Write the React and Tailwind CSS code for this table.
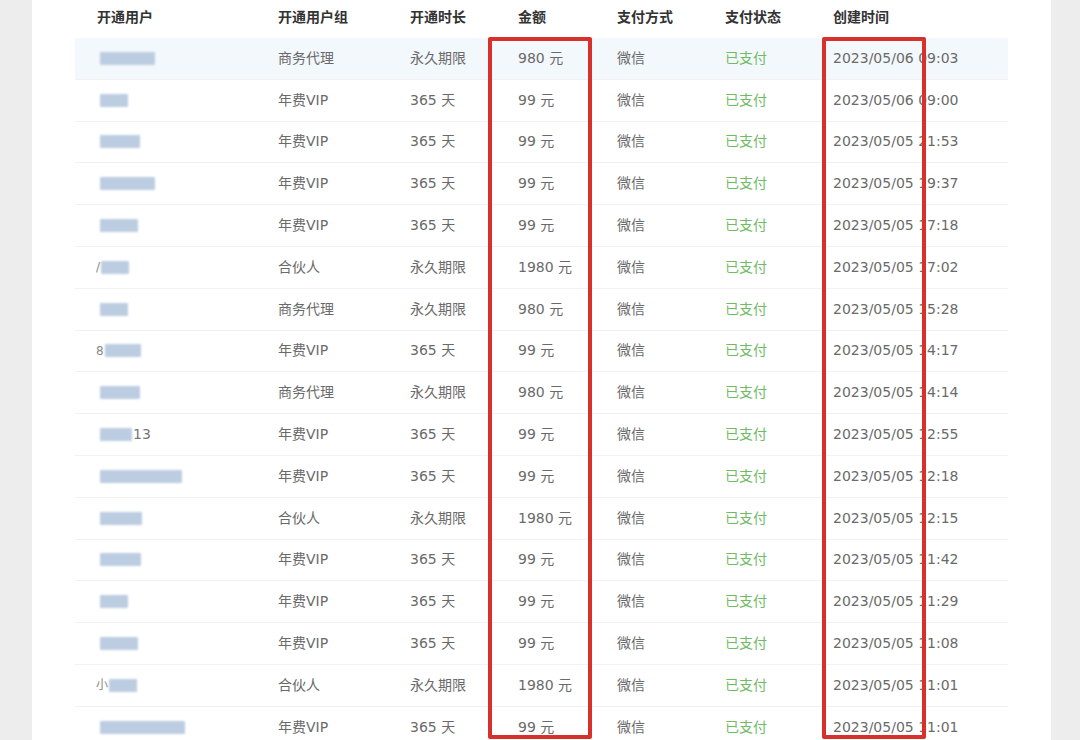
import React from "react";

const rows = [
  { user: [55], group: "商务代理", dur: "永久期限", amt: "980 元", time: "2023/05/06 09:03", hi: true },
  { user: [28], group: "年费VIP", dur: "365 天", amt: "99 元", time: "2023/05/06 09:00" },
  { user: [40], group: "年费VIP", dur: "365 天", amt: "99 元", time: "2023/05/05 21:53" },
  { user: [55], group: "年费VIP", dur: "365 天", amt: "99 元", time: "2023/05/05 19:37" },
  { user: [38], group: "年费VIP", dur: "365 天", amt: "99 元", time: "2023/05/05 17:18" },
  { user: [28], pre: "/", group: "合伙人", dur: "永久期限", amt: "1980 元", time: "2023/05/05 17:02" },
  { user: [28], group: "商务代理", dur: "永久期限", amt: "980 元", time: "2023/05/05 15:28" },
  { user: [36], pre: "8", group: "年费VIP", dur: "365 天", amt: "99 元", time: "2023/05/05 14:17" },
  { user: [40], group: "商务代理", dur: "永久期限", amt: "980 元", time: "2023/05/05 14:14" },
  { user: [32], post: "13", group: "年费VIP", dur: "365 天", amt: "99 元", time: "2023/05/05 12:55" },
  { user: [82], group: "年费VIP", dur: "365 天", amt: "99 元", time: "2023/05/05 12:18" },
  { user: [42], group: "合伙人", dur: "永久期限", amt: "1980 元", time: "2023/05/05 12:15" },
  { user: [41], group: "年费VIP", dur: "365 天", amt: "99 元", time: "2023/05/05 11:42" },
  { user: [28], group: "年费VIP", dur: "365 天", amt: "99 元", time: "2023/05/05 11:29" },
  { user: [38], group: "年费VIP", dur: "365 天", amt: "99 元", time: "2023/05/05 11:08" },
  { user: [28], pre: "小", group: "合伙人", dur: "永久期限", amt: "1980 元", time: "2023/05/05 11:01" },
  { user: [85], group: "年费VIP", dur: "365 天", amt: "99 元", time: "2023/05/05 11:01" },
];

const cols = "grid grid-cols-[181px_132px_108px_99px_108px_108px_197px]";

const App = () => {
  return (
    <div
      className="h-[740px] w-[1080px] overflow-hidden bg-[#ededed] flex"
      style={{ fontFamily: '"DejaVu Sans", "Noto Sans CJK SC", sans-serif' }}
    >
      <div className="ml-[32px] w-[1019px] h-full bg-white pl-[43px] pt-[1px]">
        <div className="relative w-[933px]">
          <div className={`${cols} h-[37px] items-center text-[14px] font-bold text-[#333]`}>
            {["开通用户", "开通用户组", "开通时长", "金额", "支付方式", "支付状态", "创建时间"].map((h) => (
              <div key={h} className="pl-[22px] pb-[4px]">{h}</div>
            ))}
          </div>

          {rows.map((r, i) => (
            <div
              key={i}
              className={`${cols} h-[41.8px] items-center text-[14px] text-[#6a6a6a] border-b border-[#f2f2f2] ${r.hi ? "bg-[#f3f8fc]" : ""}`}
            >
              <div className="pl-[25px] flex items-center gap-[1px]">
                {r.pre && <span className="text-[#888] text-[12px] -ml-[4px]">{r.pre}</span>}
                {r.user.map((w, j) => (
                  <span
                    key={j}
                    className="inline-block h-[13px] bg-[#bccde2] blur-[1px] rounded-[1px]"
                    style={{ width: w }}
                  />
                ))}
                {r.post && <span className="text-[#777]">{r.post}</span>}
              </div>
              <div className="pl-[22px]">{r.group}</div>
              <div className="pl-[22px]">{r.dur}</div>
              <div className="pl-[22px]">{r.amt}</div>
              <div className="pl-[22px]">微信</div>
              <div className="pl-[22px] text-[#6fbb66]">已支付</div>
              <div className="pl-[22px] whitespace-nowrap">{r.time}</div>
            </div>
          ))}

          <div className="absolute left-[413px] top-[36px] w-[104px] h-[702px] border-[4px] border-[#d8302a] rounded-[2px]" />
          <div className="absolute left-[747px] top-[36px] w-[104px] h-[702px] border-[4px] border-[#d8302a] rounded-[2px]" />
        </div>
      </div>
    </div>
  );
};

export default App;
